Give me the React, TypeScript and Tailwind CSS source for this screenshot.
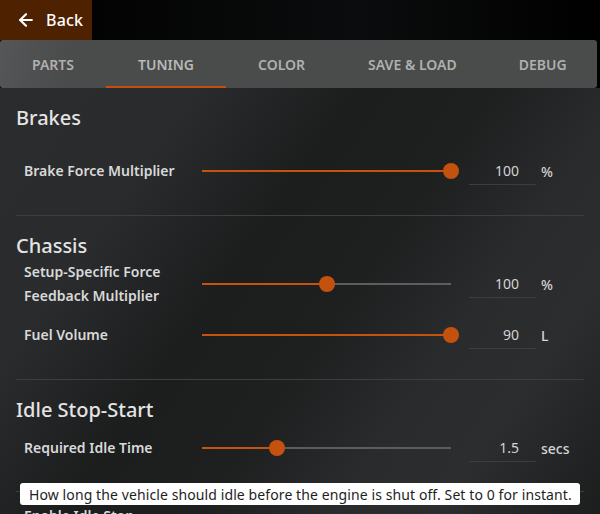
import React from 'react';
import { ArrowLeft } from 'lucide-react';

type Row = { label: string[]; value: string; unit: string; pct: number };

const tabs = ['PARTS', 'TUNING', 'COLOR', 'SAVE & LOAD', 'DEBUG'];

const Slider: React.FC<{ pct: number }> = ({ pct }) => (
    <div className="relative w-[249px] h-4 flex items-center">
        <div className="absolute left-0 right-0 h-[2px] bg-[#5c5d5e]" />
        <div className="absolute left-0 h-[2px] bg-[#c5520f]" style={{ width: `${pct}%` }} />
        <div
            className="absolute w-4 h-4 rounded-full bg-[#c4520e] -translate-x-1/2"
            style={{ left: `${pct}%` }}
        />
    </div>
);

const SettingRow: React.FC<{ row: Row; className?: string }> = ({ row, className = '' }) => (
    <div className={`flex items-center h-12 pl-2 ${className}`}>
        <div className="w-[178px] text-[14px] font-semibold text-[#d9d9d9] leading-6">
            {row.label.map(l => (
                <div key={l}>{l}</div>
            ))}
        </div>
        <Slider pct={row.pct} />
        <div className="ml-[18px] w-[67px] h-7 border-b border-[#3c3d3e] text-right pr-[17px] text-[14px] text-[#d4d4d4] leading-7">
            {row.value}
        </div>
        <div className="ml-[5px] text-[14px] font-medium text-[#d4d4d4]">{row.unit}</div>
    </div>
);

const App: React.FC = () => {
    return (
        <div
            className="w-[600px] h-[514px] overflow-hidden bg-black relative"
            style={{ fontFamily: '"Noto Sans", "Open Sans", sans-serif' }}
        >
            <div className="h-10 flex bg-[linear-gradient(90deg,#000_0%,#0b0c0d_60%,#000_100%)]">
                <div className="w-[92px] h-10 bg-[#4e2200] flex items-center pl-4 gap-[10px] text-white">
                    <ArrowLeft size={20} strokeWidth={2.6} />
                    <span className="text-[16px] font-medium tracking-[0.2px]">Back</span>
                </div>
            </div>

            <div className="h-12 mr-[3px] rounded-[3px] bg-[linear-gradient(100deg,#545657_0%,#4a4b4b_12%,#4a4b4b_100%)] flex">
                {tabs.map((t, i) => (
                    <div
                        key={t}
                        className={`relative h-12 flex items-center whitespace-nowrap text-[14px] font-semibold ${i < 3 ? 'px-8' : 'px-[31px]'} ${t === 'TUNING' ? 'text-[#b9b9b9]' : 'text-[#b0b0b0]'}`}
                    >
                        {t}
                        {t === 'TUNING' && (
                            <div className="absolute left-0 right-0 bottom-0 h-[2px] bg-[#c24f0e]" />
                        )}
                    </div>
                ))}
            </div>

            <div className="h-[426px] px-4 pt-4 bg-[linear-gradient(125deg,#2b2c2e_0%,#2a2b2d_22%,#1c1d1d_40%,#1e1f1f_55%,#2a2b2d_70%,#2c2d2f_82%,#1c1d1d_100%)]">
                <div className="text-[20px] font-medium leading-7 text-[#e4e4e4]">Brakes</div>
                <SettingRow className="mt-[15px]" row={{ label: ['Brake Force Multiplier'], value: '100', unit: '%', pct: 100 }} />
                <div className="mt-5 h-px bg-[#3d3e3f]" />

                <div className="mt-4 text-[20px] font-medium leading-7 text-[#e4e4e4]">Chassis</div>
                <SettingRow row={{ label: ['Setup-Specific Force', 'Feedback Multiplier'], value: '100', unit: '%', pct: 50 }} />
                <SettingRow className="mt-[3px]" row={{ label: ['Fuel Volume'], value: '90', unit: 'L', pct: 100 }} />
                <div className="mt-5 h-px bg-[#3d3e3f]" />

                <div className="mt-4 text-[20px] font-medium leading-7 text-[#e4e4e4]">Idle Stop-Start</div>
                <SettingRow row={{ label: ['Required Idle Time'], value: '1.5', unit: 'secs', pct: 30 }} />
                <div className="mt-[19px] h-px bg-[#3d3e3f]" />
                <div className="mt-3 pl-2 text-[14px] font-semibold leading-6 text-[#d9d9d9]">Enable Idle Stop</div>
            </div>

            <div className="absolute left-5 top-[483px] w-[560px] h-[22px] rounded-[3px] bg-white flex items-center pl-[9px] text-[14px] tracking-[0.1px] text-[#1e1e1e] whitespace-nowrap">
                How long the vehicle should idle before the engine is shut off. Set to 0 for instant.
            </div>
        </div>
    );
};

export default App;
